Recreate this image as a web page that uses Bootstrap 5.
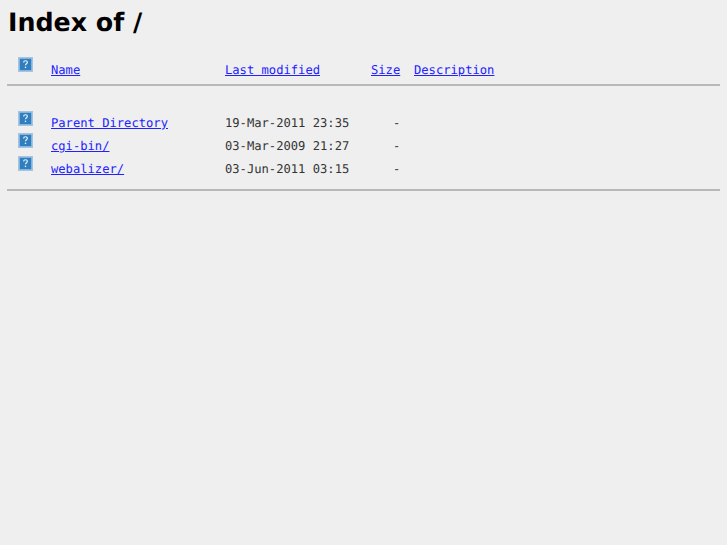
<!DOCTYPE html>
<html lang="en">
<head>
  <meta charset="UTF-8">
  <meta name="viewport" content="width=device-width, initial-scale=1">
  <title>Index of /</title>
  <link href="https://cdn.jsdelivr.net/npm/bootstrap@5.3.3/dist/css/bootstrap.min.css" rel="stylesheet">
  <style>
    body { background: #efefef; color: #333; padding: 8px 7px; font-family: "DejaVu Sans Mono", monospace; font-size: 12.15px; line-height: 15px; text-rendering: geometricPrecision; }
    h1 { font-family: "DejaVu Sans", sans-serif; font-weight: 700; font-size: 25.3px; line-height: 29px; color: #000; margin: 0 0 20px 1px; }
    a { color: #2222ff; }
    hr { margin: 0; border: 0; border-top: 2px solid #b8b8b8; opacity: 1; }
    .listing { display: grid; grid-template-columns: 44px 174px 146px 43px 1fr; }
    .cell-icon { padding-left: 11px; }
    .cell-icon svg { display: block; }
    .head-row > * { height: 27px; padding-top: 6px; }
    .head-row .cell-icon { padding-top: 0; }
    .file-row { height: 23px; }
    .file-row > * { padding-top: 5px; }
    .file-row .cell-icon { padding-top: 0; }
    .file-row + .file-row .cell-icon { margin-top: -1px; }
    .spacer { height: 25px; }
    .size-cell { padding-left: 22px; }
    .foot-gap { height: 9px; }
  </style>
</head>
<body>
  <svg width="0" height="0" class="d-block">
    <symbol id="unknownIcon" viewBox="0 0 16 16">
      <rect x="0.5" y="0.5" width="15" height="15" fill="#2f7fc0" stroke="#a6c4e2"/>
      <rect x="1.5" y="1.5" width="13" height="13" fill="none" stroke="#e6eef6" stroke-opacity=".55"/>
      <path d="M6 5.8c0-1.100.9-1.800 2-1.800s2 .7 2 1.700c0 1.500-2 1.500-2 3" fill="none" stroke="#e8f2fb" stroke-width="1.300"/>
      <rect x="7.300" y="10.300" width="1.400" height="1.500" fill="#e8f2fb"/>
    </symbol>
  </svg>

  <h1>Index of /</h1>

  <div class="listing head-row">
    <div class="cell-icon"><svg width="15" height="15"><use href="#unknownIcon"/></svg></div>
    <div><a href="#">Name</a></div>
    <div><a href="#">Last modified</a></div>
    <div><a href="#">Size</a></div>
    <div><a href="#">Description</a></div>
  </div>
  <hr>
  <div class="spacer"></div>

  <div class="listing file-row">
    <div class="cell-icon"><svg width="15" height="15"><use href="#unknownIcon"/></svg></div>
    <div><a href="#">Parent Directory</a></div>
    <div>19-Mar-2011 23:35</div>
    <div class="size-cell">-</div>
    <div></div>
  </div>
  <div class="listing file-row">
    <div class="cell-icon"><svg width="15" height="15"><use href="#unknownIcon"/></svg></div>
    <div><a href="#">cgi-bin/</a></div>
    <div>03-Mar-2009 21:27</div>
    <div class="size-cell">-</div>
    <div></div>
  </div>
  <div class="listing file-row">
    <div class="cell-icon"><svg width="15" height="15"><use href="#unknownIcon"/></svg></div>
    <div><a href="#">webalizer/</a></div>
    <div>03-Jun-2011 03:15</div>
    <div class="size-cell">-</div>
    <div></div>
  </div>
  <div class="foot-gap"></div>
  <hr>

  <script src="https://cdn.jsdelivr.net/npm/bootstrap@5.3.3/dist/js/bootstrap.bundle.min.js"></script>
</body>
</html>
